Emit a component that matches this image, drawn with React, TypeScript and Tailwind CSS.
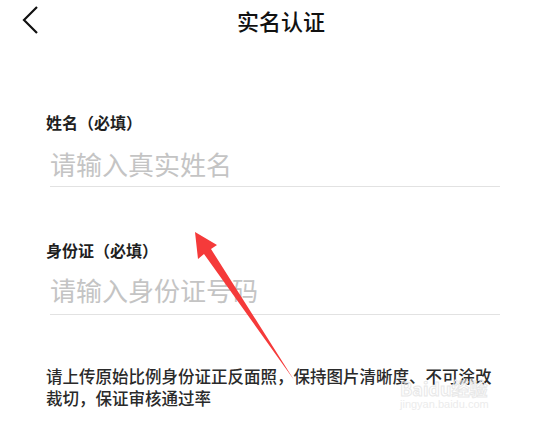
export default function App() {
  return (
    <div
      className="relative w-[539px] h-[423px] overflow-hidden bg-white text-[#1f1f1f]"
      style={{ fontFamily: '"Noto Sans CJK SC", "Noto Sans", sans-serif' }}
    >
      {/* 顶部栏 */}
      <div className="flex items-center h-[40px]">
        <svg width="18" height="30" viewBox="0 0 18 30" className="ml-[21px]">
          <polyline points="16,2 3,15 16,28" fill="none" stroke="#111" strokeWidth="2.2" strokeLinejoin="miter" />
        </svg>
        <span className="ml-[198px] text-[22px] leading-[38px] font-medium text-[#111]">实名认证</span>
      </div>

      {/* 表单 */}
      <div className="pl-[46px] pt-[71px]">
        <div className="text-[16px] leading-[22px] font-bold">姓名（必填）</div>
        <div className="ml-[4px] w-[450px] pb-[4px] border-b border-[#e2e2e2] text-[26px] leading-[36px] text-[#c4c4c4] mt-[13px]">
          请输入真实姓名
        </div>

        <div className="mt-[52px] text-[16px] leading-[22px] font-bold">身份证（必填）</div>
        <div className="ml-[4px] w-[450px] pb-[6px] border-b border-[#e2e2e2] text-[26px] leading-[36px] text-[#c4c4c4] mt-[11px]">
          请输入身份证号码
        </div>

        <p className="mt-[50px] w-[460px] text-[16.5px] leading-[22px] font-medium text-[#2a2a2a]">
          请上传原始比例身份证正反面照，保持图片清晰度、不可涂改裁切，保证审核通过率
        </p>
      </div>

      {/* 标注箭头 */}
      <svg className="absolute left-0 top-0" width="539" height="423" viewBox="0 0 539 423">
        <polygon
          points="195,232 217,245 211,249 294,380 204,254 198,259"
          fill="#f53a3a"
        />
      </svg>

      {/* 水印 */}
      <div
        className="absolute left-[400px] top-[378px] text-[18px] leading-[20px] font-bold text-transparent"
        style={{ WebkitTextStroke: "1px #e8e8e8" }}
      >
        Baidu经验
      </div>
      <div
        className="absolute left-[400px] top-[398px] text-[11px] leading-[12px] text-[#ececec]"
        style={{ fontFamily: '"Liberation Sans", sans-serif' }}
      >
        jingyan.baidu.com
      </div>
    </div>
  );
}
